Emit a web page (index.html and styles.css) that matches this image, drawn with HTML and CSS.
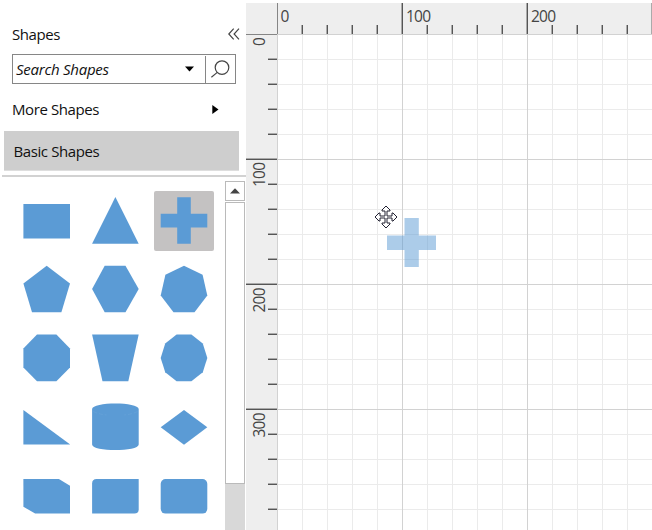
FILE: index.html
```html
<!DOCTYPE html>
<html lang="en">
<head>
<meta charset="utf-8">
<title>Diagram Editor</title>
<link rel="stylesheet" href="styles.css">
</head>
<body>
<div class="app">
  <aside class="palette">
    <header class="title-row">
      <span class="title">Shapes</span>
      <svg class="collapse" width="12" height="12" viewBox="0 0 12 12"><path d="M5.7.7.8 6l4.9 5.3M11 .7 6.1 6l4.9 5.3"/></svg>
    </header>
    <div class="search">
      <span class="search-text">Search Shapes</span>
      <svg class="caret" width="9" height="6" viewBox="0 0 9 6"><path d="M0 .4h9L4.5 5.6z"/></svg>
      <span class="search-button">
        <svg width="20" height="20" viewBox="0 0 20 20"><circle cx="11" cy="7.6" r="6.8"/><path d="M6.3 12.4.4 17.2"/></svg>
      </span>
    </div>
    <div class="more">
      <span class="more-text">More Shapes</span>
      <svg width="7" height="9" viewBox="0 0 7 9"><path d="M.3 0v9L6.5 4.5z"/></svg>
    </div>
    <div class="category">Basic Shapes</div>
    <div class="stencil">
      <div class="shapes">
        <svg class="shape" viewBox="0 0 60 60"><path d="M6.4 13h46.6v34.6H6.4z"/></svg>
        <svg class="shape" viewBox="0 0 60 60"><path d="M30.4 6 53.7 52.7H7.1z"/></svg>
        <svg class="shape selected" viewBox="0 0 60 60"><path d="M23.2 6.2h13.6v16.6h16.5v13.6H36.8v16.4H23.2V36.4H6.7V22.8h16.5z"/></svg>
        <svg class="shape" viewBox="0 0 60 60"><path d="m29.7 6.7 23.3 17.9-8.6 28.6H15L6.4 24.6z"/></svg>
        <svg class="shape" viewBox="0 0 60 60"><path d="M19.7 6.7h20.8L53.7 30 40.5 53.2H19.7L7.1 30z"/></svg>
        <svg class="shape" viewBox="0 0 60 60"><path d="m30 6.7 18.6 9 4.7 20.8-12.8 16.7h-21L6.7 36.5l4.7-20.8z"/></svg>
        <svg class="shape" viewBox="0 0 60 60"><path d="M20 6.6h19.4L53 20.5v18.9L39.4 53.2H20L6.4 39.4V20.5z"/></svg>
        <svg class="shape" viewBox="0 0 60 60"><path d="M7.1 6.6h46.6L43.3 53.2H17.5z"/></svg>
        <svg class="shape" viewBox="0 0 60 60"><path d="M22.6 6.6h14.8l11.4 8.9L53.3 30l-4.5 14.3-11.4 8.9H22.6l-11.4-8.9L6.7 30l4.5-14.5z"/></svg>
        <svg class="shape" viewBox="0 0 60 60"><path d="m6.4 13 46.8 34.5H6.4z"/></svg>
        <svg class="shape" viewBox="0 0 60 60"><path d="M7.1 12.1c0-7.6 46.6-7.6 46.6 0v35.4c0 7.4-46.6 7.4-46.6 0z"/><path class="rim" d="M8.4 14.5q5 2.7 13 3.4M52.4 14.5q-5 2.7-13 3.4"/></svg>
        <svg class="shape" viewBox="0 0 60 60"><path d="M30 13 53.3 30.3 30 47.7 6.7 30.3z"/></svg>
        <svg class="shape" viewBox="0 0 60 60"><path d="M6.4 13h35.5L53 19.8v27.8H18.1L6.4 40.7z"/></svg>
        <svg class="shape" viewBox="0 0 60 60"><path d="M11.6 13h42.1v30.2q0 4.4-4.4 4.4H7.1V17.5q0-4.5 4.5-4.5z"/></svg>
        <svg class="shape" viewBox="0 0 60 60"><rect x="6.7" y="13" width="46.6" height="34.6" rx="4.8"/></svg>
      </div>
      <div class="scrollbar">
        <div class="scroll-button"><svg width="10" height="6" viewBox="0 0 10 6"><path d="M5 .3 10 5.4H0z"/></svg></div>
        <div class="scroll-thumb"></div>
      </div>
    </div>
  </aside>
  <main class="diagram">
    <div class="corner"></div>
    <svg class="ruler-x" width="375" height="31">
      <defs>
        <pattern id="tx" width="25" height="31" patternUnits="userSpaceOnUse"><path class="tick-soft" d="M24 22h1v9h-1z"/><path class="tick" d="M0 22h1v9H0z"/></pattern>
      </defs>
      <rect width="375" height="31" fill="url(#tx)"/>
      <path class="tick-edge" d="M0 0h1v31H0z"/>
      <path class="tick-soft" d="M124 0h1v31h-1zM249 0h1v31h-1zM374 0h1v31h-1z"/>
      <path class="tick" d="M125 0h1v31h-1zM250 0h1v31h-1z"/>
      <text x="3.5" y="19">0</text>
      <text x="129" y="19">100</text>
      <text x="254" y="19">200</text>
    </svg>
    <svg class="ruler-y" width="31" height="496">
      <defs>
        <pattern id="ty" width="31" height="25" patternUnits="userSpaceOnUse"><path class="tick-soft" d="M22 24h9v1h-9z"/><path class="tick" d="M22 0h9v1h-9z"/></pattern>
      </defs>
      <rect width="31" height="496" fill="url(#ty)"/>
      <path class="tick-edge" d="M0 0h31v1H0z"/>
      <path class="tick-soft" d="M0 124h31v1H0zM0 249h31v1H0zM0 374h31v1H0z"/>
      <path class="tick" d="M0 125h31v1H0zM0 250h31v1H0zM0 375h31v1H0z"/>
      <text transform="translate(19 12) rotate(-90)">0</text>
      <text transform="translate(19 153) rotate(-90)">100</text>
      <text transform="translate(19 278.5) rotate(-90)">200</text>
      <text transform="translate(19 403.5) rotate(-90)">300</text>
    </svg>
    <div class="canvas">
      <svg class="ghost" width="49" height="49" viewBox="0 0 49 49"><path d="M17.5 0h14.3v17.5H49v14.4H31.8V49H17.5V31.9H0V17.5h17.5z"/></svg>
      <svg class="move-cursor" width="24" height="24" viewBox="-12 -12 24 24"><path d="M0-11 4-7v1H1v5h5v-3h1L11 0 7 4H6V1H1v5h3v1L0 11-4 7V6h3V1h-5v3h-1L-11 0l4-4h1v3h5v-5h-3v-1z"/></svg>
    </div>
  </main>
</div>
</body>
</html>
```

FILE: styles.css
```css
* { box-sizing: border-box; }

body {
  margin: 0;
  background: #fff;
  font-family: "Open Sans", "Noto Sans", sans-serif;
  font-size: 15px;
  letter-spacing: -.4px;
  color: #111;
}

svg { display: block; flex: none; }

.app {
  display: flex;
  width: 652px;
  height: 530px;
  overflow: hidden;
}

.palette {
  display: flex;
  flex-direction: column;
  width: 246px;
  flex: none;
  padding-top: 24px;
}

.title-row {
  display: flex;
  align-items: center;
  justify-content: space-between;
  height: 20px;
  margin: 0 6px 10px 12px;
}

.collapse { fill: none; stroke: #444; stroke-width: 1.2; }

.search {
  display: flex;
  align-items: center;
  width: 224px;
  height: 30px;
  margin-left: 12px;
  padding-left: 3px;
  border: 1px solid #868686;
}

.search-text { flex: 1; font-style: italic; letter-spacing: -.25px; }
.caret { margin-right: 11px; }

.search-button {
  display: flex;
  align-items: center;
  justify-content: center;
  align-self: flex-end;
  width: 30px;
  height: 27px;
  border-left: 1px solid #868686;
}

.search-button svg { fill: none; stroke: #444; stroke-width: 1.2; }

.more {
  display: flex;
  align-items: center;
  justify-content: space-between;
  height: 47px;
  padding: 3px 27px 0 12px;
}

.category {
  display: flex;
  align-items: center;
  width: 235px;
  height: 40px;
  margin-left: 4px;
  padding: 0 0 0 9.5px;
  background: #cecece;
  border-bottom: 1px solid #dedede;
}

.stencil {
  display: flex;
  flex: 1;
  min-height: 0;
  margin: 4px 0 0 2px;
  padding-right: 1px;
  border-top: 2px solid #d2d2d2;
}

.shapes {
  display: grid;
  grid-template-columns: repeat(3, 60px);
  grid-auto-rows: 60px;
  gap: 8.8px;
  padding: 13.6px 0 0 14.6px;
  width: 223px;
  overflow: hidden;
}

.shape { width: 60px; height: 60px; fill: #5b9bd5; }
.selected { background: #c4c2c2; border-radius: 2px; }
.rim { fill: none; stroke: #69a4d9; stroke-width: .6; stroke-dasharray: 4 2; }

.scrollbar {
  width: 20px;
  margin-top: 4px;
  background: #d8d8d8;
}

.scroll-button {
  display: flex;
  align-items: center;
  justify-content: center;
  height: 20px;
  border: 1px solid #bababa;
  background: #fff;
  fill: #444;
}

.scroll-thumb {
  height: 282px;
  border: 1px solid #bababa;
  background: #fff;
  box-shadow: 0 -1px #fff;
  margin-top: 1px;
}

.diagram {
  display: grid;
  grid-template-columns: 31px 375px;
  grid-template-rows: 31px 496px;
  padding-top: 3px;
}

.corner, .ruler-x, .ruler-y { background: #eee; }

.ruler-x text, .ruler-y text { font-size: 15.5px; letter-spacing: -.75px; fill: #444; }
.tick { fill: #555; }
.tick-soft { fill: #aaa; }
.tick-edge { fill: #858585; }

.canvas {
  position: relative;
  background-color: #fff;
  background-image:
    linear-gradient(90deg, #d2d2d2 1px, transparent 1px),
    linear-gradient(#d2d2d2 1px, transparent 1px),
    linear-gradient(90deg, #ebebeb 1px, transparent 1px),
    linear-gradient(#ebebeb 1px, transparent 1px);
  background-size: 125px 100%, 100% 125px, 25px 100%, 100% 25px;
}

.ghost {
  position: absolute;
  left: 110px;
  top: 184px;
  fill: #5b9bd5;
  opacity: .5;
}

.move-cursor {
  position: absolute;
  left: 97px;
  top: 171px;
  fill: #fff;
  stroke: #223;
  stroke-width: 1;
}
```
